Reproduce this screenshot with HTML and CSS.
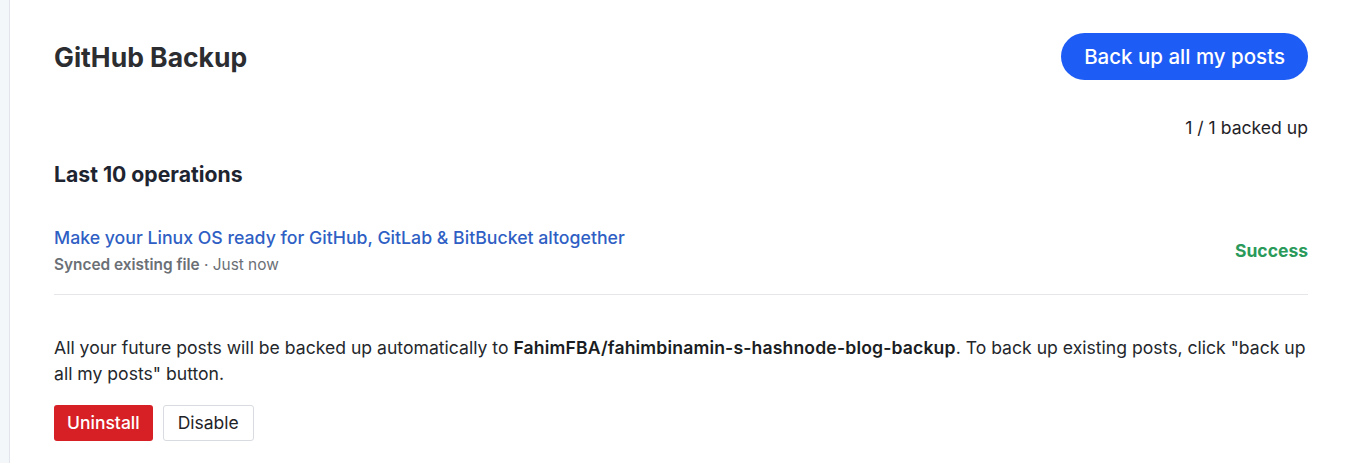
FILE: index.html
```html
<!DOCTYPE html>
<html>
    <head>
        <title>GitHub Backup</title>
        <link rel="stylesheet" href="styles.css">
    </head>
    <body>
        <div class="page">
            <div class="rail"></div>
            <div class="main">
                <div class="header">
                    <h1 class="title">GitHub Backup</h1>
                    <div class="backup-all button">Back up all my posts</div>
                </div>
                <div class="count">1 / 1 backed up</div>

                <h2 class="subtitle">Last 10 operations</h2>
                <div class="operation">
                    <div class="op-info">
                        <a class="op-title" href="#">Make your Linux OS ready for GitHub, GitLab &amp; BitBucket altogether</a>
                        <div class="op-meta"><b>Synced existing file</b> · Just now</div>
                    </div>
                    <div class="op-status">Success</div>
                </div>

                <p class="note">All your future posts will be backed up automatically to <b>FahimFBA/fahimbinamin-s-hashnode-blog-backup</b>. To back up existing posts, click "back up all my posts" button.</p>

                <div class="actions">
                    <div class="uninstall button">Uninstall</div>
                    <div class="disable button">Disable</div>
                </div>
            </div>
        </div>
    </body>
</html>
```

FILE: styles.css
```css
html, body {
    margin: 0;
    height: 100%;
}
body {
    font-family: Inter, "Liberation Sans", sans-serif;
    color: #1f2328;
    background: #fff;
}
.page {
    display: flex;
    min-height: 100%;
}
.rail {
    width: 9px;
    background: #f4f7fa;
    border-right: 1px solid #e2e6ec;
    flex-shrink: 0;
}
.main {
    flex: 1;
    padding: 33px 39px 0 44px;
}
.header {
    display: flex;
    justify-content: space-between;
    align-items: center;
}
.title {
    margin: 0;
    font-size: 26.5px;
    font-weight: 700;
    color: #2b2d31;
}
.button {
    cursor: pointer;
    user-select: none;
}
.backup-all {
    background: #1d5cf5;
    color: #fff;
    font-size: 20.5px;
    font-weight: 500;
    height: 47px;
    line-height: 47px;
    padding: 0 23px;
    border-radius: 24px;
}
.count {
    text-align: right;
    font-size: 17.6px;
    margin-top: 37px;
    color: #1f2328;
}
.subtitle {
    margin: 23px 0 0;
    font-size: 21.2px;
    font-weight: 700;
    color: #1e2430;
}
.operation {
    display: flex;
    justify-content: space-between;
    align-items: center;
    padding: 40px 0 20px;
    border-bottom: 1px solid #e4e6ea;
}
.op-title {
    font-size: 17.7px;
    font-weight: 500;
    color: #2f5fc4;
    text-decoration: none;
}
.op-meta {
    margin-top: 7px;
    font-size: 15.4px;
    color: #6b6f76;
}
.op-meta b {
    font-weight: 600;
}
.op-status {
    font-size: 17.5px;
    font-weight: 700;
    color: #2a9a5a;
}
.note {
    margin: 40px 0 0;
    font-size: 17.6px;
    line-height: 26px;
    color: #24272c;
}
.note b {
    font-weight: 600;
    letter-spacing: 0.15px;
    color: #1a1d22;
}
.actions {
    display: flex;
    gap: 10px;
    margin-top: 18px;
}
.uninstall, .disable {
    font-size: 17.5px;
    height: 36px;
    line-height: 36px;
    padding: 0 13px;
    border-radius: 3px;
    box-sizing: border-box;
}
.uninstall {
    background: #d71f26;
    color: #fff;
    font-weight: 500;
}
.disable {
    border: 1px solid #d8dbe0;
    line-height: 34px;
    padding: 0 14px;
    color: #1f2328;
}
```
